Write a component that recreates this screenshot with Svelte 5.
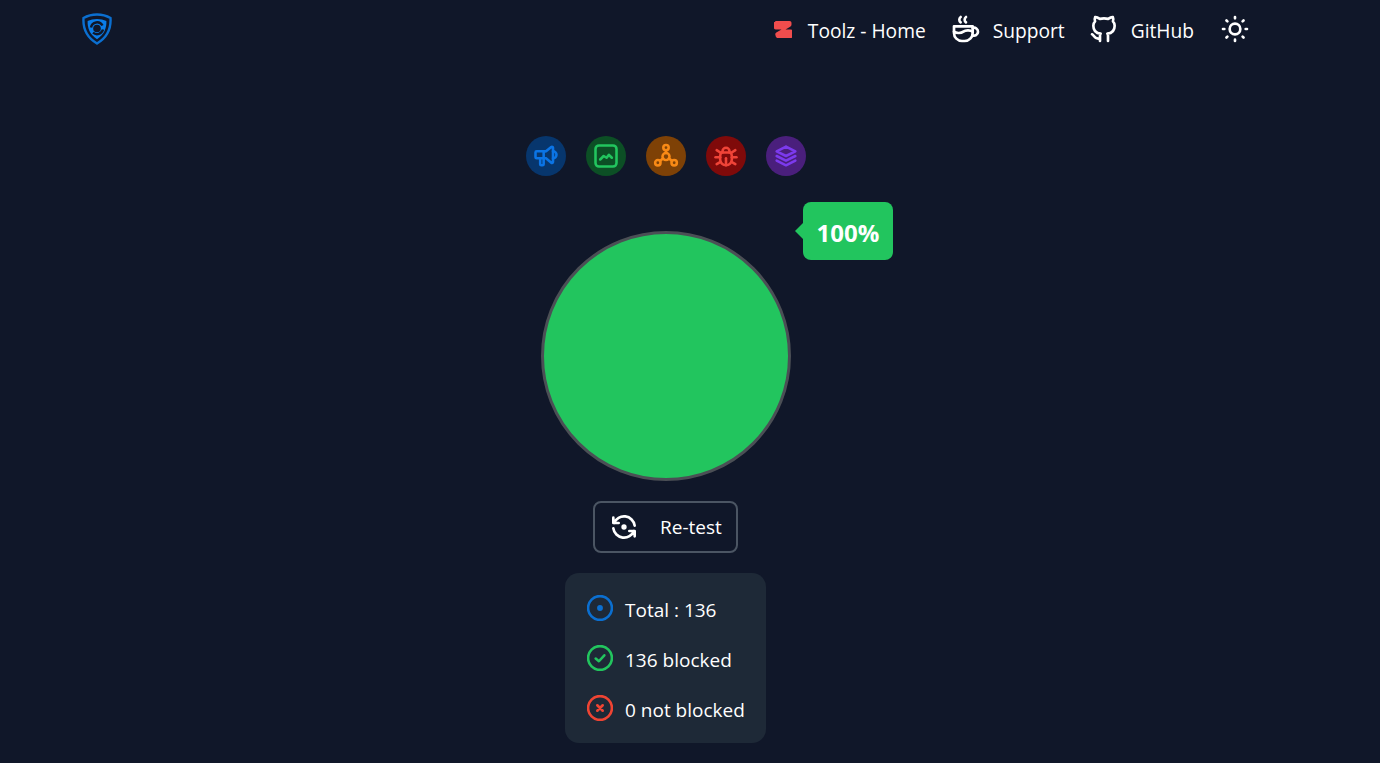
<script>
	const links = [
		{ label: 'Toolz - Home', icon: 'toolz' },
		{ label: 'Support', icon: 'coffee' },
		{ label: 'GitHub', icon: 'github' }
	];

	const shortcuts = [
		{ name: 'blue', paths: ['M18 8a3 3 0 0 1 0 6', 'M10 8v11a1 1 0 0 1 -1 1h-1a1 1 0 0 1 -1 -1v-5', 'M12 8l4.524 -3.77a.9 .9 0 0 1 1.476 .692v12.156a.9 .9 0 0 1 -1.476 .692l-4.524 -3.77h-8a1 1 0 0 1 -1 -1v-4a1 1 0 0 1 1 -1h8'] },
		{ name: 'green', paths: ['M6 3h12a3 3 0 0 1 3 3v12a3 3 0 0 1 -3 3h-12a3 3 0 0 1 -3 -3v-12a3 3 0 0 1 3 -3z', 'M7 15l3 -3l2.500 1.500l2 -2.500l2.500 2.500'] },
		{ name: 'orange', paths: ['M12 9.500a3 3 0 1 0 0 6a3 3 0 1 0 0 -6', 'M12 2.500a2.300 2.300 0 1 0 0 4.600a2.300 2.300 0 1 0 0 -4.600', 'M5 15.500a2.300 2.300 0 1 0 0 4.600a2.300 2.300 0 1 0 0 -4.600', 'M19 15.500a2.300 2.300 0 1 0 0 4.600a2.300 2.300 0 1 0 0 -4.600', 'M12 7.100v2.400', 'M9.500 14l-2.600 2.300', 'M14.500 14l2.600 2.300'] },
		{ name: 'red', paths: ['M9 9v-1a3 3 0 0 1 6 0v1', 'M8 9h8a6 6 0 0 1 1 3v3a5 5 0 0 1 -10 0v-3a6 6 0 0 1 1 -3', 'M3 13h4', 'M17 13h4', 'M12 20v-6', 'M4 19l3.350 -2', 'M20 19l-3.350 -2', 'M4 7l3.750 2.400', 'M20 7l-3.750 2.400'] },
		{ name: 'purple', paths: ['M12 4l-8 4l8 4l8 -4l-8 -4', 'M4 12l8 4l8 -4', 'M4 16l8 4l8 -4'] }
	];

	const stats = [
		{ text: 'Total : 136', color: '#0b6fd0', mark: 'dot' },
		{ text: '136 blocked', color: '#22c55e', mark: 'check' },
		{ text: '0 not blocked', color: '#ef4433', mark: 'cross' }
	];
</script>

<div class="page">
	<nav class="nav">
		<svg class="logo" viewBox="0 0 30 32" aria-hidden="true">
			<path d="M15 1.500c4.500 0 9.500 1.200 13.500 3.500c.6 9.500-2.500 19-13.500 25.500c-11-6.500-14.100-16-13.500-25.500c4-2.300 9-3.500 13.500-3.500z" fill="none" stroke="#0b6fd0" stroke-width="2.400" />
			<path d="M15 6c3.400 0 6.600 .7 9.400 2c.2 7-2 13.400-9.400 18.200c-7.400-4.800-9.600-11.200-9.400-18.200c2.800-1.300 6-2 9.400-2z" fill="#0b7de8" />
			<path d="M9 14.500a6.200 6.200 0 0 1 11.500 -2" fill="none" stroke="#101729" stroke-width="2.400" />
			<path d="M21 16.500a6.200 6.200 0 0 1 -10 3.200" fill="none" stroke="#101729" stroke-width="2.400" />
			<circle cx="15" cy="15.500" r="3.800" fill="#101729" />
		</svg>
		<div class="links">
			{#each links as link}
				<a class="link" href="#top">
					{#if link.icon === 'toolz'}
						<svg class="toolz" viewBox="0 0 18 17" aria-hidden="true">
							<path d="M1.500 0h14c1.300 0 2 .8 2 2v1.500c0 1-.5 1.700-1.300 2.200l-4.700 2.800h5c1.400 0 2.500 1 2.500 2.400v3.800c0 1.400-1 2.300-2.400 2.300h-12.600c-1.200 0-2-.8-2.300-1.800l-.4-1.600c-.2-.9 .2-1.700 1-2.200l5.200-3h-5.600c-1.200 0-2-.8-2.300-1.800l-.5-2.700c-.3-1.400 .5-2.900 1.900-2.900z" fill="#f04d4d" />
						</svg>
					{:else if link.icon === 'coffee'}
						<svg class="icon" viewBox="0 0 24 24" aria-hidden="true">
							<path d="M3 14c.83 .642 2.077 1.017 3.500 1c1.423 .017 2.670 -.358 3.500 -1c.83 -.642 2.077 -1.017 3.500 -1c1.423 -.017 2.670 .358 3.500 1" />
							<path d="M8 3a2.400 2.400 0 0 0 -1 2a2.400 2.400 0 0 0 1 2" />
							<path d="M12 3a2.400 2.400 0 0 0 -1 2a2.400 2.400 0 0 0 1 2" />
							<path d="M3 10h14v5a6 6 0 0 1 -6 6h-2a6 6 0 0 1 -6 -6v-5z" />
							<path d="M16.746 16.726a3 3 0 1 0 .252 -5.555" />
						</svg>
					{:else}
						<svg class="icon" viewBox="0 0 24 24" aria-hidden="true">
							<path d="M9 19c-4.300 1.400 -4.300 -2.500 -6 -3m12 5v-3.500c0 -1 .1 -1.400 -.5 -2c2.800 -.3 5.500 -1.400 5.500 -6a4.600 4.600 0 0 0 -1.300 -3.200a4.200 4.200 0 0 0 -.1 -3.200s-1.100 -.3 -3.500 1.300a12.300 12.300 0 0 0 -6.200 0c-2.400 -1.600 -3.500 -1.300 -3.500 -1.300a4.200 4.200 0 0 0 -.1 3.200a4.600 4.600 0 0 0 -1.300 3.200c0 4.600 2.700 5.700 5.500 6c-.6 .6 -.6 1.200 -.5 2v3.500" />
						</svg>
					{/if}
					<span class="label">{link.label}</span>
				</a>
			{/each}
			<button class="theme" aria-label="Toggle theme">
				<svg class="icon" viewBox="0 0 24 24" aria-hidden="true">
					<path d="M12 12m-4 0a4 4 0 1 0 8 0a4 4 0 1 0 -8 0" />
					<path d="M3 12h1m8 -9v1m8 8h1m-9 8v1m-6.400 -15.400l.7 .7m12.100 -.7l-.7 .7m0 11.400l.7 .7m-12.100 -.7l-.7 .7" />
				</svg>
			</button>
		</div>
	</nav>

	<main class="main">
		<div class="shortcuts">
			{#each shortcuts as item}
				<button class="shortcut {item.name}" aria-label={item.name}>
					<svg viewBox="0 0 24 24" aria-hidden="true">
						{#each item.paths as d}
							<path {d} />
						{/each}
					</svg>
				</button>
			{/each}
		</div>

		<div class="gauge">
			<div class="score">100%</div>
		</div>

		<button class="retest">
			<svg class="icon" viewBox="0 0 24 24" aria-hidden="true">
				<path d="M20 11a8.100 8.100 0 0 0 -15.500 -2m-.5 -4v4h4" />
				<path d="M4 13a8.100 8.100 0 0 0 15.500 2m.5 4v-4h-4" />
				<path d="M12 12m-1 0a1 1 0 1 0 2 0a1 1 0 1 0 -2 0" />
			</svg>
			<span>Re-test</span>
		</button>

		<div class="card">
			{#each stats as stat}
				<div class="stat">
					<svg class="mark" viewBox="0 0 24 24" style="color: {stat.color}" aria-hidden="true">
						<circle cx="12" cy="12" r="11" />
						{#if stat.mark === 'dot'}
							<circle cx="12" cy="12" r="1.500" fill="currentColor" />
						{:else if stat.mark === 'check'}
							<path d="M8 12.500l3 2.500l5 -5.500" />
						{:else}
							<path d="M9.500 9.500l5 5m0 -5l-5 5" />
						{/if}
					</svg>
					<span>{stat.text}</span>
				</div>
			{/each}
		</div>
	</main>
</div>

<style>
	:global(body) {
		background: #101729;
	}
	.page {
		width: 1332px;
		height: 763px;
		overflow: hidden;
		font-family: "Open Sans", "Noto Sans", sans-serif;
		color: #fff;
	}
	.nav {
		display: flex;
		justify-content: space-between;
		align-items: flex-start;
		padding: 13px 82px 0;
	}
	.logo {
		width: 30px;
		height: 32px;
	}
	.links {
		display: flex;
		align-items: center;
		gap: 24px;
	}
	.link {
		display: flex;
		align-items: center;
		gap: 11px;
		color: #fff;
		text-decoration: none;
		font-size: 19.200px;
	}
	.link:nth-child(3) {
		margin: 0 1px 0 -1px;
	}
	.label {
		margin-top: 2px;
	}
	.toolz {
		width: 18px;
		height: 17px;
		margin-right: 5px;
	}
	.icon {
		width: 32px;
		height: 32px;
		fill: none;
		stroke: currentColor;
		stroke-width: 2;
		stroke-linecap: round;
		stroke-linejoin: round;
	}
	.theme {
		display: flex;
		margin-right: -1px;
		padding: 0;
		border: 0;
		background: none;
		color: #fff;
	}
	.main {
		display: flex;
		flex-direction: column;
		align-items: center;
		padding-top: 91px;
	}
	.shortcuts {
		display: flex;
		gap: 20px;
	}
	.shortcut {
		display: flex;
		align-items: center;
		justify-content: center;
		width: 40px;
		height: 40px;
		padding: 0;
		border: 0;
		border-radius: 50%;
	}
	.shortcut svg {
		width: 28px;
		height: 28px;
		fill: none;
		stroke: currentColor;
		stroke-width: 2.200;
		stroke-linecap: round;
		stroke-linejoin: round;
	}
	.blue { background: #07366d; color: #0b74e5; }
	.green { background: #0c4f25; color: #22c55e; }
	.orange { background: #7e4106; color: #f98a16; }
	.red { background: #7f0a0a; color: #f04438; }
	.purple { background: #4a1f7c; color: #7c3aed; }
	.gauge {
		position: relative;
		box-sizing: border-box;
		width: 250px;
		height: 250px;
		margin-top: 55px;
		border: 3px solid #4b4f55;
		border-radius: 50%;
		background: #22c55e;
	}
	.score {
		position: absolute;
		left: 259px;
		top: -32px;
		width: 90px;
		height: 58px;
		line-height: 62px;
		text-align: center;
		border-radius: 8px;
		background: #22c55e;
		font-size: 24px;
		font-weight: 700;
	}
	.score::before {
		content: "";
		position: absolute;
		left: -8px;
		top: 21px;
		border-style: solid;
		border-width: 8px 8px 8px 0;
		border-color: transparent #22c55e transparent transparent;
	}
	.retest {
		display: flex;
		align-items: center;
		gap: 20px;
		box-sizing: border-box;
		width: 145px;
		height: 52px;
		margin: 20px 1px 0 0;
		padding: 0 0 0 13px;
		border: 2px solid #4b5563;
		border-radius: 8px;
		background: none;
		color: #fff;
		font: inherit;
		font-size: 19px;
		white-space: nowrap;
	}
	.card {
		display: flex;
		flex-direction: column;
		box-sizing: border-box;
		width: 201px;
		height: 170px;
		margin: 20px 1px 0 0;
		padding: 10px 0 0 22px;
		border-radius: 14px;
		background: #1e2937;
	}
	.stat {
		display: flex;
		align-items: center;
		gap: 12px;
		height: 50px;
		font-size: 19px;
		white-space: nowrap;
	}
	.stat span {
		margin-top: 4px;
	}
	.mark {
		width: 26px;
		height: 26px;
		fill: none;
		stroke: currentColor;
		stroke-width: 2.400;
		stroke-linecap: round;
		stroke-linejoin: round;
	}
</style>
